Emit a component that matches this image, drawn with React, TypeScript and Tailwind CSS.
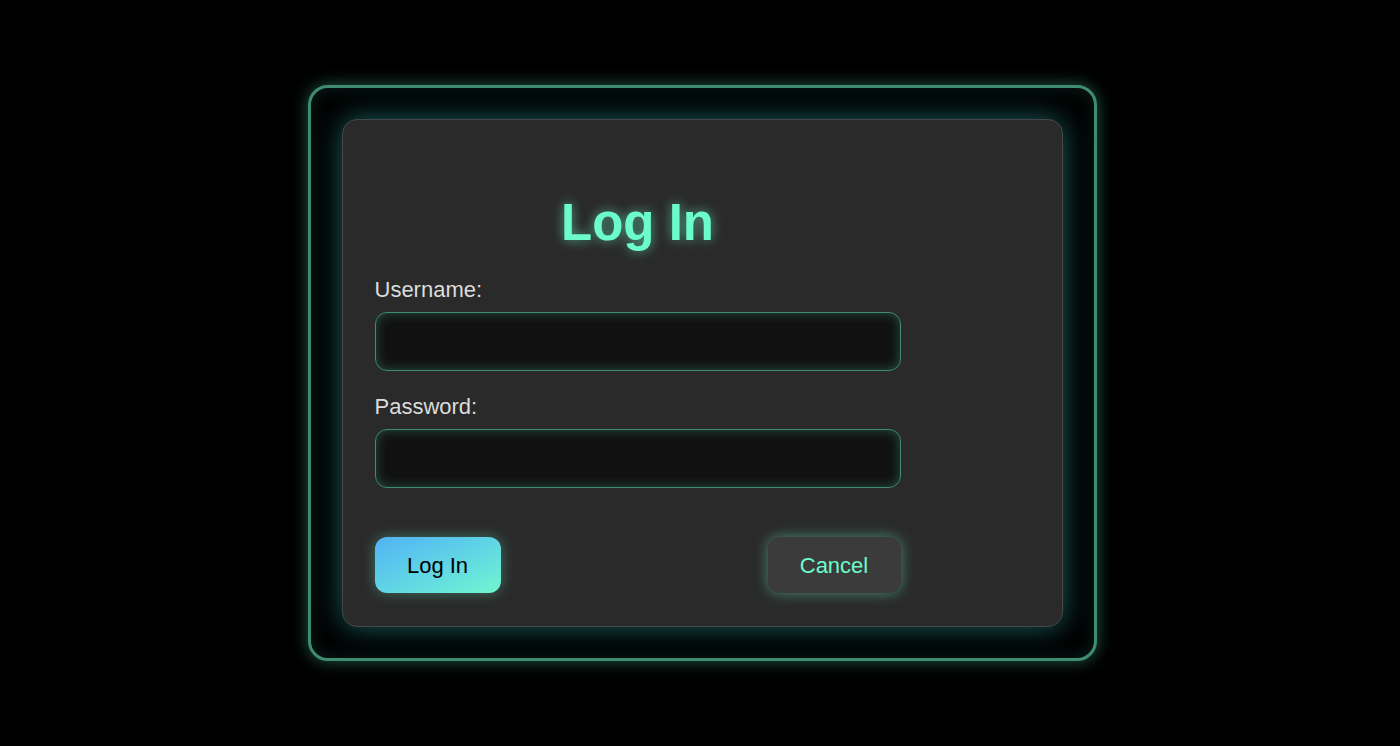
export default function App() {
  return (
    <div className="min-h-screen w-full bg-black flex items-center justify-center font-['Liberation_Sans',Arial,sans-serif]">
      {/* Outer glowing frame */}
      <div className="ml-[4px] rounded-[20px] border-[3px] border-[#3f8c6e] bg-black p-[31px] shadow-[0_0_16px_rgba(100,255,200,0.35),inset_0_0_20px_rgba(60,200,190,0.15)]">
        {/* Panel */}
        <div className="w-[721px] h-[508px] rounded-[15px] border border-[#474747] bg-[#2a2a2a] px-[32px] pt-[72px] shadow-[0_0_28px_rgba(50,175,175,0.55)]">
          <div className="w-[526px]">
            <h1 className="text-center text-[51px] leading-[62px] font-bold text-[#6cfccb] [text-shadow:0_0_12px_rgba(108,252,203,0.6)]">
              Log In
            </h1>

            <label className="mt-[19px] block text-[22px] leading-[33px] text-[#dcdcdc]">Username:</label>
            <input
              type="text"
              className="mt-[6px] block w-full h-[59px] rounded-[12px] border border-[#3f8c6e] bg-[#111111] px-4 text-white outline-none shadow-[inset_0_0_12px_rgba(80,200,160,0.35)]"
            />

            <label className="mt-[19px] block text-[22px] leading-[33px] text-[#dcdcdc]">Password:</label>
            <input
              type="password"
              className="mt-[6px] block w-full h-[59px] rounded-[12px] border border-[#3f8c6e] bg-[#111111] px-4 text-white outline-none shadow-[inset_0_0_12px_rgba(80,200,160,0.35)]"
            />

            <div className="mt-[49px] flex justify-between">
              <button
                type="button"
                className="w-[126px] h-[56px] rounded-[12px] bg-gradient-to-br from-[#52b2f5] to-[#72f5d0] text-[22px] text-black shadow-[0_0_14px_rgba(108,252,203,0.35)]"
              >
                Log In
              </button>
              <button
                type="button"
                className="w-[133px] h-[56px] rounded-[12px] bg-[#3b3b3b] text-[22px] text-[#6cfccb] shadow-[0_0_14px_rgba(108,252,203,0.45)]"
              >
                Cancel
              </button>
            </div>
          </div>
        </div>
      </div>
    </div>
  )
}
